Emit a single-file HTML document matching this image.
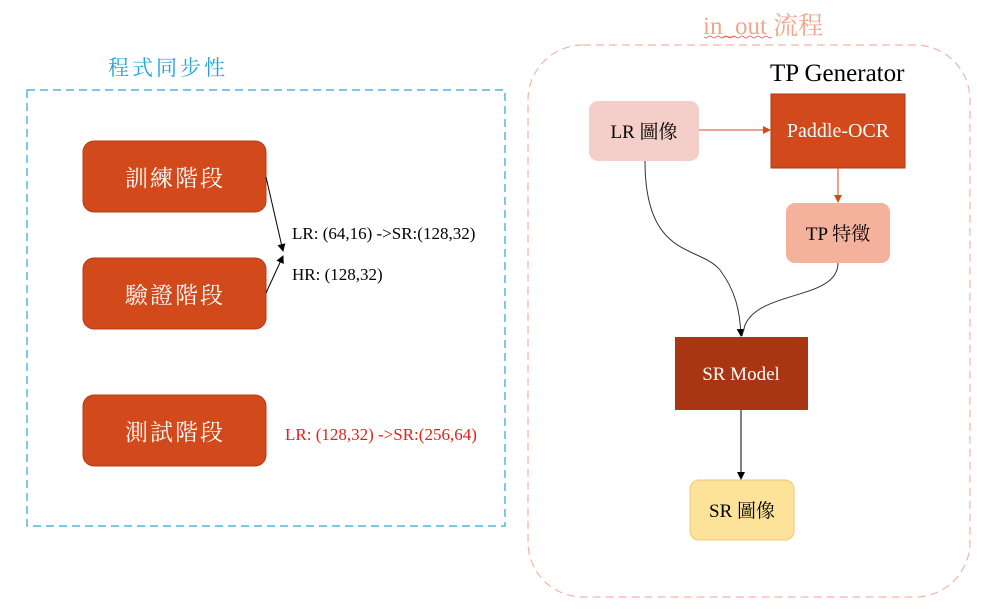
<!DOCTYPE html>
<html><head><meta charset="utf-8"><style>
html,body{margin:0;padding:0;background:#fff;width:983px;height:612px;overflow:hidden}
svg{display:block}
text{font-family:"Liberation Serif","Noto Serif CJK SC","Noto Sans CJK TC",serif}
</style></head><body>
<svg width="983" height="612" viewBox="0 0 983 612" xmlns="http://www.w3.org/2000/svg">
<defs>
<marker id="ab" markerWidth="8" markerHeight="8" refX="7" refY="4" orient="auto" markerUnits="userSpaceOnUse"><path d="M0,0 L8,4 L0,8z" fill="#000"/></marker>
<marker id="ao" markerWidth="8" markerHeight="8" refX="7" refY="4" orient="auto" markerUnits="userSpaceOnUse"><path d="M0,0 L8,4 L0,8z" fill="#d24a1c"/></marker>
</defs>
<text x="108" y="75" font-size="21" fill="#21a3d6" letter-spacing="3" font-family="Noto Sans CJK TC,sans-serif">程式同步性</text>
<rect x="27" y="90" width="478" height="436" fill="none" stroke="#2aa6cf" stroke-width="1.2" stroke-dasharray="8,5"/>
<rect x="83" y="141" width="183" height="71" rx="11" fill="#d24a1c" stroke="#b33c14"/>
<rect x="83" y="258" width="183" height="71" rx="11" fill="#d24a1c" stroke="#b33c14"/>
<rect x="83" y="395" width="183" height="71" rx="11" fill="#d24a1c" stroke="#b33c14"/>
<g fill="#fff" font-size="23" text-anchor="middle" letter-spacing="2">
<text x="175" y="186">訓練階段</text><text x="175" y="303">驗證階段</text><text x="175" y="440">測試階段</text></g>
<path d="M266 177 L283 251" stroke="#000" fill="none" marker-end="url(#ab)"/>
<path d="M266 293 L283 256" stroke="#000" fill="none" marker-end="url(#ab)"/>
<text x="292" y="239" font-size="17">LR: (64,16) -&gt;SR:(128,32)</text>
<text x="292" y="280" font-size="17">HR: (128,32)</text>
<text x="285" y="440" font-size="17" fill="#e0201a">LR: (128,32) -&gt;SR:(256,64)</text>
<text x="703" y="34" font-size="25" fill="#f0a58c">in_out 流程</text>
<path d="M704 37 q2 2 4 0 t4 0 t4 0 t4 0 t4 0 t4 0 t4 0 t4 0 t4 0 t4 0 t4 0 t4 0 t4 0 t4 0 t4 0 t4 0 t4 0" stroke="#e05050" fill="none" stroke-width="0.8"/>
<rect x="528" y="45" width="442" height="552" rx="55" fill="none" stroke="#f4b5a6" stroke-width="1.2" stroke-dasharray="8,5"/>
<text x="770" y="81" font-size="25">TP Generator</text>
<rect x="589" y="101" width="110" height="60" rx="9" fill="#f4cfca"/>
<text x="644" y="138" font-size="19" text-anchor="middle">LR 圖像</text>
<rect x="771" y="94" width="134" height="74" fill="#d24a1c" stroke="#a83a12"/>
<text x="838" y="137" font-size="20" fill="#fff" text-anchor="middle">Paddle-OCR</text>
<rect x="786" y="203" width="104" height="60" rx="9" fill="#f4b19c"/>
<text x="838" y="240" font-size="19" text-anchor="middle">TP 特徵</text>
<rect x="675" y="337" width="133" height="73" fill="#a83612"/>
<text x="741" y="380" font-size="19" fill="#fff" text-anchor="middle">SR Model</text>
<rect x="690" y="480" width="104" height="60" rx="9" fill="#fde29a" stroke="#f0c870"/>
<text x="742" y="517" font-size="19" text-anchor="middle">SR 圖像</text>
<path d="M699 130 L770 130" stroke="#d24a1c" fill="none" marker-end="url(#ao)"/>
<path d="M838 168 L838 202" stroke="#d24a1c" fill="none" marker-end="url(#ao)"/>
<path d="M645 161 C645 260 700 245 720 270 C735 290 740 310 741 336" stroke="#333" fill="none" marker-end="url(#ab)"/>
<path d="M838 263 C838 300 760 290 745 325 L742 336" stroke="#333" fill="none"/>
<path d="M741 410 L741 479" stroke="#000" fill="none" marker-end="url(#ab)"/>
</svg>
</body></html>
